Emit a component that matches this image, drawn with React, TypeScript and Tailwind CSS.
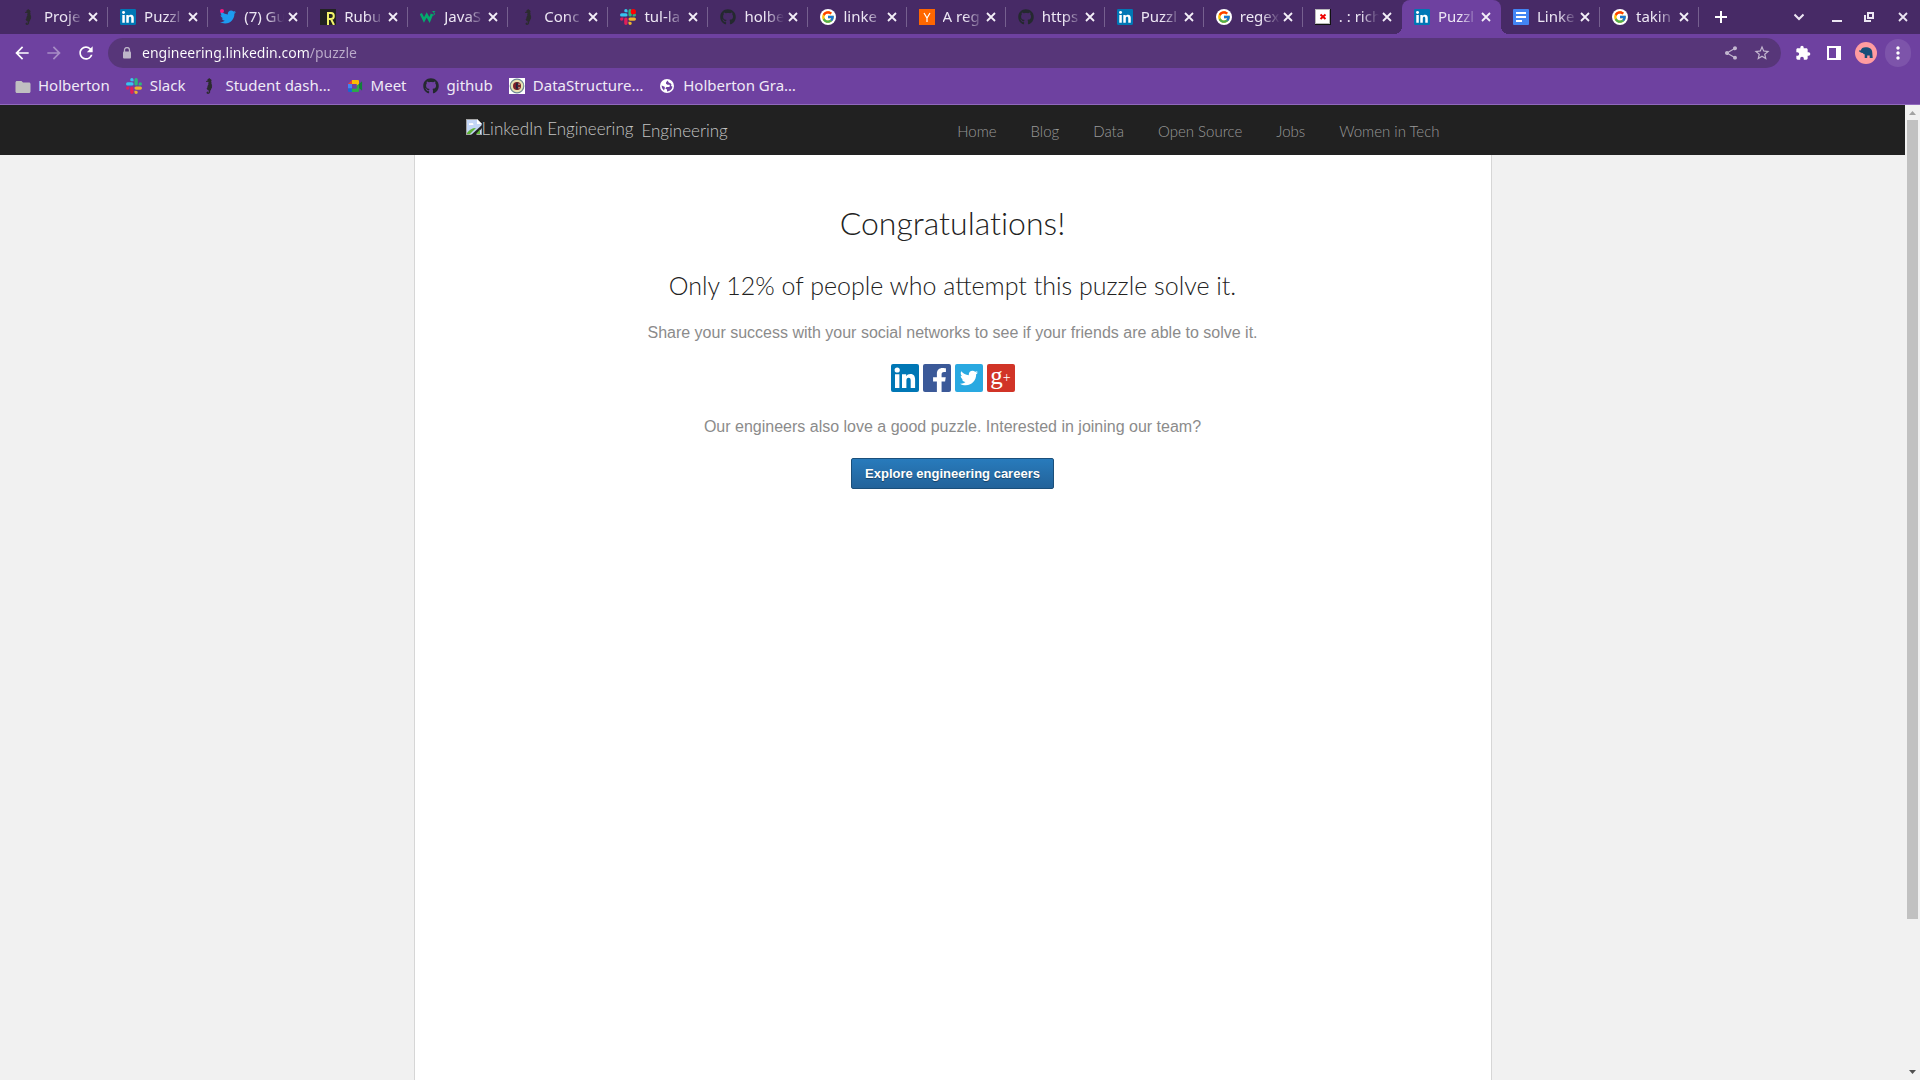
import type { ReactNode } from "react";
import { FaFacebookF, FaGithub, FaTwitter } from "react-icons/fa";
import { FcGoogle } from "react-icons/fc";
import { MdArrowBack, MdArrowForward, MdExtension, MdFolder, MdMoreVert, MdRefresh, MdShare, MdStarBorder } from "react-icons/md";

function SlackIcon({ dot = false }: { dot?: boolean }) {
  const arm =
    "M8.834 5.042a2.528 2.528 0 0 1-2.521-2.52A2.528 2.528 0 0 1 8.834 0a2.528 2.528 0 0 1 2.521 2.522v2.52H8.834zM8.834 6.313a2.528 2.528 0 0 1 2.521 2.521 2.528 2.528 0 0 1-2.521 2.521H2.522A2.528 2.528 0 0 1 0 8.834a2.528 2.528 0 0 1 2.522-2.521h6.312z";
  return (
    <svg viewBox="0 0 24 24" className="size-4">
      <path d={arm} fill="#36c5f0" />
      <path d={arm} fill="#2eb67d" transform="rotate(90 12 12)" />
      <path d={arm} fill="#ecb22e" transform="rotate(180 12 12)" />
      <path d={arm} fill="#e01e5a" transform="rotate(270 12 12)" />
      {dot && <circle cx="20" cy="4" r="4" fill="#f00" />}
    </svg>
  );
}

function SeahorseIcon() {
  return (
    <svg viewBox="0 0 16 16" className="size-4" fill="#2b2b2e">
      <path d="M6.500 1.200 7.800.6l.5-.5.7.7 1.200.7.4 1.300-.5.8.5.9-.4.8.7.7-.2.900.5 1-.4.900.2 1.100-.900.800-.100 1.300-.900.800.1 1.400-.900 1.300-1.300.500-1.200-.5-.3-1.200.8-.8 1 .4-.3.8.7-.3V12.400l-1.300-.6-.8-1.400.8-1 .1-1.500.9-1.300-.2-1.300.400-.800-.400-.700-1.400.300-.8-.4.2-.7 1.400-.5z" />
    </svg>
  );
}

function LinkedInIcon({ className = "size-4" }: { className?: string }) {
  return (
    <svg viewBox="0 0 28 28" className={className}>
      <rect width="28" height="28" rx="2" fill="#0077b5" />
      <circle cx="6.2" cy="6" r="2.6" fill="#fff" />
      <path
        fill="#fff"
        d="M4 10.3h4.4V24H4zM11 10.3h4.2v1.9c.8-1.4 2.3-2.3 4.2-2.3 3.6 0 4.7 2.4 4.7 5.8V24h-4.4v-7.3c0-1.8-.5-3-2-3-1.700 0-2.300 1.200-2.300 3V24H11z"
      />
    </svg>
  );
}

function TwitterTabIcon() {
  return (
    <span className="relative block size-4">
      <FaTwitter className="size-4 text-[#1d9bf0]" />
      <span className="absolute left-0 top-0 size-1 rounded-full bg-[#f91880]" />
    </span>
  );
}

function RubularIcon() {
  return (
    <svg viewBox="0 0 16 16" className="size-4">
      <rect width="16" height="16" fill="#222" />
      <path d="M8 16V4h3a2.800 3 0 0 1 0 6H8m3 0 3 6" fill="none" stroke="#f3f36b" strokeWidth="2" />
    </svg>
  );
}

function W3Icon() {
  return (
    <svg viewBox="0 0 16 16" className="size-4" fill="none" stroke="#04aa6d">
      <path d="M.8 4.500 4 11l2.700-5L9.500 11l2.500-6" strokeWidth="2.600" />
      <path d="M12.500 2.500h2.300l-1.300 1.300c1.400 0 1.700 2 0 2.200h-1" strokeWidth="1" />
    </svg>
  );
}

function GithubIcon() {
  return <FaGithub className="size-4 text-[#24292f]" />;
}

function GoogleIcon() {
  return (
    <span className="grid size-4 place-items-center rounded-full bg-white">
      <FcGoogle className="size-3.5" />
    </span>
  );
}

function YIcon() {
  return (
    <svg viewBox="0 0 16 16" className="size-4">
      <rect width="16" height="16" fill="#ff6600" />
      <path d="M5 4l3 5 3-5M8 9v4" fill="none" stroke="#fff" strokeWidth="1.200" />
    </svg>
  );
}

function RedCrossIcon() {
  return (
    <svg viewBox="0 0 16 16" className="size-4">
      <rect width="16" height="16" fill="#111" />
      <rect width="15" height="15" fill="#b9b9b9" />
      <rect x="1" y="1" width="13" height="13" fill="#fff" />
      <path d="M5.500 5.500l5 4.500M10.500 5.500l-5 4.500" stroke="#e00" strokeWidth="2" />
    </svg>
  );
}

function DocsIcon() {
  return (
    <svg viewBox="0 0 16 16" className="size-4">
      <rect width="16" height="16" rx="1" fill="#4285f4" />
      <path d="M3 4h10M3 8h10M3 12h6" stroke="#fff" strokeWidth="2" />
    </svg>
  );
}

function MeetIcon() {
  return (
    <svg viewBox="0 0 16 16" className="size-4">
      <path d="M1 6 5 2v4z" fill="#ea4335" />
      <path d="M5 2h6a1 1 0 0 1 1 1v3L9.500 8V6H5z" fill="#fbbc04" />
      <path d="M1 6h4v4.500H1z" fill="#4285f4" />
      <path d="M1 10.500h4V14H2a1 1 0 0 1-1-1z" fill="#1967d2" />
      <path d="M5 10.500h4.500V8L12 6v7a1 1 0 0 1-1 1H5z" fill="#2ba84a" />
      <path d="M12 6l2.500-2.300c.3-.2.600 0 .600.300v8c0 .4-.3.500-.6.300L12 10z" fill="#12803a" />
      <path d="M5 6h4.500v4.500H5z" fill="#6e41a0" />
    </svg>
  );
}

function EmblemIcon() {
  return (
    <svg viewBox="0 0 16 16" className="size-4">
      <rect width="16" height="16" fill="#fff" />
      <circle cx="8" cy="8" r="6.800" fill="#e9e2b4" stroke="#6f8a93" strokeWidth="1.200" />
      <circle cx="8" cy="8" r="4" fill="#7e1f28" />
      <path d="M8 4.500v7M9.800 6.300H7.500v3.400h2.300" stroke="#1f2440" strokeWidth="1.200" fill="none" />
      <path d="M10 5.500v1.500M10 9v1.500" stroke="#e9e2b4" />
    </svg>
  );
}

function GlobeIcon() {
  return (
    <svg viewBox="0 0 14 14" className="size-3.5">
      <circle cx="7" cy="7" r="7" fill="#fff" />
      <path
        d="M7.500 1.600 6 3.500v1.300l1.500.9h2l.5 1.500-1.200.8H6.500L5.300 9.500 7 10.500v1.900c3 0 5.200-2 5.400-4.800L11 7l.5-1.500L10.200 4 9 3.700zM1.600 6.500l3 1.300.300 1.200-.900 2.500A5.500 5.500 0 0 1 1.600 6.500z"
        fill="#6e41a0"
      />
    </svg>
  );
}

function LockIcon() {
  return (
    <svg viewBox="0 0 10 12" className="h-3 w-2.5">
      <path d="M2.500 5V3a2.500 2.500 0 0 1 5 0v2" fill="none" stroke="#bdb5c8" strokeWidth="1.300" />
      <rect x="1" y="4.500" width="8" height="7" rx="1" fill="#bdb5c8" />
    </svg>
  );
}

function CloseIcon({ className }: { className: string }) {
  return (
    <svg viewBox="0 0 10 10" className={className} fill="none" stroke="currentColor" strokeWidth="1.800">
      <path d="M1 1l8 8M9 1 1 9" />
    </svg>
  );
}

type Tab = { icon: ReactNode; title: string; active?: boolean; line?: boolean; wide?: boolean };

const tabs: Tab[] = [
  { icon: <SeahorseIcon />, title: "Proje", line: true, wide: true },
  { icon: <LinkedInIcon />, title: "Puzzl", line: true, wide: true },
  { icon: <TwitterTabIcon />, title: "(7) Gu", line: true, wide: true },
  { icon: <RubularIcon />, title: "Rubu", line: true, wide: true },
  { icon: <W3Icon />, title: "JavaS", line: true, wide: true },
  { icon: <SeahorseIcon />, title: "Conc", line: true, wide: true },
  { icon: <SlackIcon dot />, title: "tul-la", line: true, wide: true },
  { icon: <GithubIcon />, title: "holbe", line: true },
  { icon: <GoogleIcon />, title: "linke", line: true },
  { icon: <YIcon />, title: "A reg", line: true },
  { icon: <GithubIcon />, title: "https", line: true },
  { icon: <LinkedInIcon />, title: "Puzzl", line: true },
  { icon: <GoogleIcon />, title: "regex", line: true },
  { icon: <RedCrossIcon />, title: ". : rich" },
  { icon: <LinkedInIcon />, title: "Puzzl", active: true },
  { icon: <DocsIcon />, title: "Linke", line: true },
  { icon: <GoogleIcon />, title: "takin", line: true },
];

function BrowserTab({ icon, title, active, line, wide }: Tab) {
  return (
    <div
      className={`relative flex min-w-0 basis-0 items-center ${wide ? "grow-[100]" : "grow-[99]"} ${active ? "rounded-t-lg bg-[#6e41a0]" : ""}`}
    >
      <button role="tab" aria-selected={!!active} className="flex h-full min-w-0 flex-1 items-center gap-2 pl-3">
        <span className="size-4 shrink-0">{icon}</span>
        <span className="w-10 overflow-hidden whitespace-nowrap pb-px text-left text-[15px] text-[#ece6f3] [mask-image:linear-gradient(to_right,#000_55%,transparent)]">
          {title}
        </span>
      </button>
      <button aria-label={`Close ${title}`} className="mr-2.5 grid h-4 w-2.5 place-items-center text-[#f3eff8]">
        <CloseIcon className="size-2.5" />
      </button>
      {line && <span className="absolute right-0 top-[7px] h-5 w-px bg-[#76608f]" />}
      {active && (
        <>
          <span className="absolute -left-2 bottom-0 size-2 bg-[radial-gradient(circle_at_0_0,transparent_8px,#6e41a0_8px)]" />
          <span className="absolute -right-2 bottom-0 size-2 bg-[radial-gradient(circle_at_100%_0,transparent_8px,#6e41a0_8px)]" />
        </>
      )}
    </div>
  );
}

function TabStrip() {
  return (
    <div className="flex h-[34px] shrink-0 bg-[#472a66] pl-2 text-[#ece6f3]">
      <div role="tablist" className="flex min-w-0 flex-1">
        {tabs.map((tab, i) => (
          <BrowserTab key={i} {...tab} />
        ))}
      </div>
      <div className="flex w-[221px] shrink-0 items-center pl-4">
        <button aria-label="New tab">
          <svg viewBox="0 0 12 12" className="size-3" stroke="#fff" strokeWidth="2">
            <path d="M6 0v12M0 6h12" />
          </svg>
        </button>
        <div className="ml-auto flex items-center gap-7 pr-3">
          <button aria-label="Search tabs">
            <svg viewBox="0 0 10 10" className="size-2.5" fill="none" stroke="currentColor" strokeWidth="2">
              <path d="M.5 2.500 5 7l4.500-4.500" />
            </svg>
          </button>
          <button aria-label="Minimize">
            <svg viewBox="0 0 10 10" className="size-2.5" stroke="currentColor" strokeWidth="2">
              <path d="M0 9h10" />
            </svg>
          </button>
          <button aria-label="Restore" className="-ml-1.5">
            <svg viewBox="0 0 10 10" className="size-2.5" fill="none" stroke="currentColor" strokeWidth="2">
              <path d="M4 1h5v5H4zM1 3v6h6" />
            </svg>
          </button>
          <button aria-label="Close window" className="-ml-1">
            <CloseIcon className="size-2.5" />
          </button>
        </div>
      </div>
    </div>
  );
}

function Toolbar() {
  return (
    <div className="flex h-[38px] shrink-0 items-center pl-3 pr-[9px] text-white">
      <div className="flex w-24 items-center gap-3">
        <button aria-label="Back"><MdArrowBack className="size-5" /></button>
        <button aria-label="Forward"><MdArrowForward className="size-5 text-[#a88dc6]" /></button>
        <button aria-label="Reload"><MdRefresh className="size-5" /></button>
      </div>
      <div className="flex h-[30px] flex-1 items-center rounded-full bg-[#573679] pl-3 pr-2.5 text-[#c3b7d0]">
        <span className="grid w-3.5 place-items-center"><LockIcon /></span>
        <input
          aria-label="Address"
          defaultValue="engineering.linkedin.com/puzzle"
          className="ml-2 min-w-0 flex-1 bg-[linear-gradient(to_right,#fff_167px,#bcaccb_167px)] bg-clip-text pb-0.5 text-[14px] text-transparent outline-none"
        />
        <button aria-label="Share"><MdShare className="size-4" /></button>
        <button aria-label="Bookmark this page" className="ml-3.5"><MdStarBorder className="size-[18px]" /></button>
      </div>
      <div className="flex shrink-0 items-center pl-3.5">
        <button aria-label="Extensions"><MdExtension className="size-4" /></button>
        <button aria-label="Side panel" className="ml-4">
          <svg viewBox="0 0 14 14" className="size-3.5">
            <path fill="#fff" fillRule="evenodd" d="M0 0h14v14H0zM2 2v10h7V2z" />
          </svg>
        </button>
        <button aria-label="Profile" className="ml-3.5">
          <svg viewBox="0 0 22 22" className="size-[22px]">
            <circle cx="11" cy="11" r="11" fill="#ff9ca0" />
            <path d="M5 10c-1.300-.300-1.200-1.600-.200-1.700l1 .3C6 6.500 8 5.300 10.500 5.300c4 0 6.800 1.500 6.800 5.700l.4 5h-3v-2.500h-2.500V16H9.700v-3.700c-1 0-1.500-.6-1.800-1.300-.8.200-2-.2-2.900-1z" fill="#174e78" />
          </svg>
        </button>
        <button aria-label="Menu" className="ml-2 grid h-7 w-[26px] place-items-center rounded-full bg-[#7d54aa]">
          <MdMoreVert className="size-5" />
        </button>
      </div>
    </div>
  );
}

const bookmarks: { icon: ReactNode; label: string }[] = [
  { icon: <MdFolder className="size-[18px] text-[#c0bfc1]" />, label: "Holberton" },
  { icon: <SlackIcon />, label: "Slack" },
  { icon: <SeahorseIcon />, label: "Student dash…" },
  { icon: <MeetIcon />, label: "Meet" },
  { icon: <GithubIcon />, label: "github" },
  { icon: <EmblemIcon />, label: "DataStructure…" },
  { icon: <GlobeIcon />, label: "Holberton Gra…" },
];

function BookmarksBar() {
  return (
    <nav
      aria-label="Bookmarks"
      className="flex h-[33px] shrink-0 items-center gap-4 border-b border-[#9169bd] pb-1 pl-3.5 text-[15px] text-[#f0eaf6]"
    >
      {bookmarks.map(({ icon, label }) => (
        <a key={label} href="#" className="flex items-center gap-2 whitespace-nowrap">
          <span className="grid size-4 place-items-center">{icon}</span>
          <span className="pb-0.5">{label}</span>
        </a>
      ))}
    </nav>
  );
}

function BrokenImageIcon() {
  return (
    <svg viewBox="0 0 16 16" className="size-4 shrink-0">
      <path d="M0 0h11l5 5v11H0z" fill="#a5a5a5" />
      <path d="M1 1h10v4h4v10H1z" fill="#c3d6f7" />
      <path d="M11 0l5 5h-5z" fill="#fff" />
      <path d="M3 5c0-1.200 1.500-1.500 2-.6C6.500 3.500 7.500 4.500 7.500 6H3z" fill="#fff" />
      <path d="M1 15v-1c2-3 5-5 9-5l-6 6z" fill="#5fb336" />
      <path d="M5 16 16 6v3l-6 7z" fill="#212121" />
      <path d="M10 15l4-4.500V15z" fill="#5fb336" />
    </svg>
  );
}

const navLinks = ["Home", "Blog", "Data", "Open Source", "Jobs", "Women in Tech"];

function SiteHeader() {
  return (
    <header className="h-[50px] shrink-0 bg-[#212121] font-[Lato,sans-serif] font-light">
      <div className="mx-auto flex h-full max-w-[1078px] items-center justify-between px-[52px]">
        <a href="#" className="flex items-start gap-2 text-[17px] leading-5 text-[#c4c4c4]">
          <span className="flex">
            <BrokenImageIcon />
            LinkedIn Engineering
          </span>
          <span className="pt-0.5">Engineering</span>
        </a>
        <nav className="flex gap-[34px] pt-0.5 text-[15px] leading-5 text-[#999]">
          {navLinks.map((label) => (
            <a key={label} href="#">{label}</a>
          ))}
        </nav>
      </div>
    </header>
  );
}

function ShareLinks() {
  return (
    <div className="mt-[19px] flex justify-center gap-1">
      <a href="#" aria-label="Share on LinkedIn"><LinkedInIcon className="size-7" /></a>
      <a href="#" aria-label="Share on Facebook" className="flex size-7 items-end justify-end overflow-hidden rounded-xs bg-[#3b5998] pr-1 text-white">
        <FaFacebookF className="h-6 w-[15px]" />
      </a>
      <a href="#" aria-label="Share on Twitter" className="grid size-7 place-items-center rounded-xs bg-[#29a9e1] text-white">
        <FaTwitter className="size-[18px]" />
      </a>
      <a href="#" aria-label="Share on Google+" className="flex size-7 items-start justify-center rounded-xs bg-[#d13427] font-['Liberation_Serif',serif] text-white">
        <span className="text-[25px] leading-6">g</span>
        <span className="pt-1 text-[14px] leading-5">+</span>
      </a>
    </div>
  );
}

function Puzzle() {
  return (
    <main className="mx-auto w-full max-w-[1078px] flex-1 border-x border-[#d6d6d6] bg-white text-center font-['Liberation_Sans',Arial,sans-serif] text-[16px] leading-6 text-[#8b8b8b]">
      <div className="pt-12">
        <h1 className="font-[Lato,sans-serif] text-[32px] font-light leading-10 text-[#222] [font-variant-ligatures:none]">
          Congratulations!
        </h1>
        <h2 className="mt-6 font-[Lato,sans-serif] text-[25px] font-light leading-9 text-[#222]">
          Only 12% of people who attempt this puzzle solve it.
        </h2>
        <p className="mt-[18px]">Share your success with your social networks to see if your friends are able to solve it.</p>
        <ShareLinks />
        <p className="mt-[23px]">Our engineers also love a good puzzle. Interested in joining our team?</p>
        <button className="mt-[19px] h-[31px] rounded-xs border border-[#1b4f7a] bg-linear-to-b from-[#287bbc] to-[#23639a] px-[13px] text-[13px] font-bold leading-5 text-white [text-shadow:0_1px_1px_rgba(0,0,0,0.4)]">
          Explore engineering careers
        </button>
      </div>
    </main>
  );
}

function ScrollBar() {
  return (
    <div aria-hidden="true" className="flex w-[15px] shrink-0 flex-col items-center bg-[#f1f1f1]">
      <svg viewBox="0 0 15 15" className="size-[15px] shrink-0">
        <path d="M4 10l3.500-4L11 10z" fill="#a3a3a3" />
      </svg>
      <div className="min-h-0 w-full flex-1 px-0.5">
        <div className="h-[84.6%] bg-[#c1c1c1]" />
      </div>
      <svg viewBox="0 0 15 15" className="size-[15px] shrink-0">
        <path d="M4 5l3.500 4L11 5z" fill="#505050" />
      </svg>
    </div>
  );
}

export default function App() {
  return (
    <div className="flex h-screen flex-col overflow-hidden bg-[#6e41a0] font-['Noto_Sans',sans-serif]">
      <TabStrip />
      <Toolbar />
      <BookmarksBar />
      <div className="flex min-h-0 flex-1">
        <div className="flex min-w-0 flex-1 flex-col bg-[#f1f1f1]">
          <SiteHeader />
          <Puzzle />
        </div>
        <ScrollBar />
      </div>
    </div>
  );
}
